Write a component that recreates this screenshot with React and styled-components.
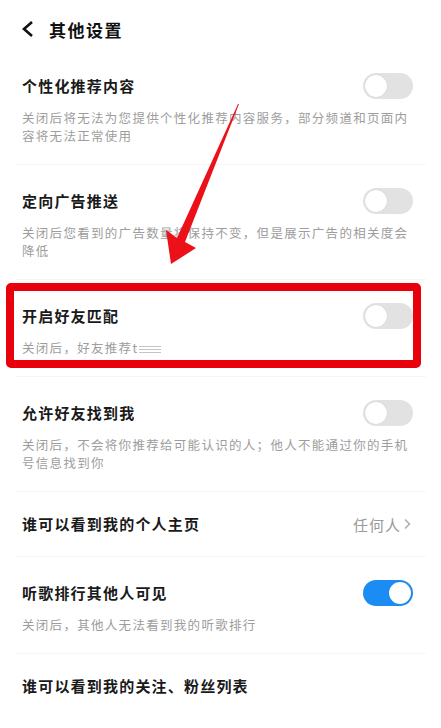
import React from "react";
import styled, { createGlobalStyle } from "styled-components";

const GlobalStyle = createGlobalStyle`
  body {
    margin: 0;
    background: #fff;
    font-family: "Noto Sans CJK SC", "Noto Sans", sans-serif;
  }
`;

const Page = styled.div`
  position: relative;
  width: 441px;
  height: 728px;
  overflow: hidden;
  background: #fff;
`;

const Header = styled.div`
  height: 50px;
  box-sizing: border-box;
  padding: 8px 0 0 22px;
  display: flex;
  align-items: center;
  gap: 15px;
`;

const HeaderTitle = styled.h1`
  margin: 0;
  font-size: 17px;
  font-weight: 700;
  letter-spacing: 1.5px;
  color: #111;
`;

const List = styled.div`
  padding: 0 15px;
`;

const Row = styled.div`
  padding: ${(props) => (props.single ? "22px 15px 22px 7px" : "26px 13px 19px 7px")};
  border-bottom: ${(props) => (props.last ? "none" : "1px solid #f6f6f6")};
`;

const RowHead = styled.div`
  display: flex;
  align-items: center;
  justify-content: space-between;
  height: 20px;
`;

const Title = styled.div`
  font-size: 15px;
  font-weight: 700;
  letter-spacing: 1.2px;
  color: #1a1a1a;
  line-height: 20px;
`;

const Desc = styled.div`
  margin-top: 13px;
  font-size: 12.5px;
  line-height: 18px;
  letter-spacing: 1.3px;
  color: #9d9d9d;
`;

const Smudge = styled.span`
  display: inline-block;
  width: 22px;
  height: 7px;
  margin-left: 1px;
  vertical-align: middle;
  background: repeating-linear-gradient(#c4c4c4 0 1px, transparent 1px 3px);
`;

const Track = styled.div`
  width: 50px;
  height: 26px;
  box-sizing: border-box;
  border-radius: 13px;
  padding: 2px;
  display: flex;
  justify-content: ${(props) => (props.on ? "flex-end" : "flex-start")};
  background: ${(props) => (props.on ? "#1a8cf4" : "#e2e2e2")};
  flex-shrink: 0;
`;

const Knob = styled.div`
  width: 22px;
  height: 22px;
  border-radius: 50%;
  background: #fff;
  box-shadow: 0 0 1px rgba(0, 0, 0, 0.2);
`;

const Value = styled.span`
  display: flex;
  align-items: center;
  gap: 2px;
  font-size: 15px;
  color: #9a9a9a;
  letter-spacing: 1px;
`;

const RedBox = styled.div`
  position: absolute;
  left: 6px;
  top: 283px;
  width: 415px;
  height: 85px;
  box-sizing: border-box;
  border: 8px solid #e8000b;
  border-radius: 5px;
  pointer-events: none;
`;

const Arrow = styled.svg`
  position: absolute;
  left: 0;
  top: 0;
  pointer-events: none;
`;

function Toggle({ on }) {
  return (
    <Track on={on}>
      <Knob />
    </Track>
  );
}

function Chevron() {
  return (
    <svg width="12" height="18" viewBox="0 0 12 18">
      <polyline points="10,2 2,9 10,16" fill="none" stroke="#111" strokeWidth="2.6" strokeLinejoin="miter" />
    </svg>
  );
}

function SmallChevron() {
  return (
    <svg width="8" height="12" viewBox="0 0 8 12">
      <polyline points="2,1.5 6.5,6 2,10.5" fill="none" stroke="#a6a6a6" strokeWidth="1.3" />
    </svg>
  );
}

export default function App() {
  return (
    <Page>
      <GlobalStyle />
      <Header>
        <Chevron />
        <HeaderTitle>其他设置</HeaderTitle>
      </Header>
      <List>
        <Row>
          <RowHead>
            <Title>个性化推荐内容</Title>
            <Toggle />
          </RowHead>
          <Desc>关闭后将无法为您提供个性化推荐内容服务，部分频道和页面内容将无法正常使用</Desc>
        </Row>
        <Row>
          <RowHead>
            <Title>定向广告推送</Title>
            <Toggle />
          </RowHead>
          <Desc>关闭后您看到的广告数量将保持不变，但是展示广告的相关度会降低</Desc>
        </Row>
        <Row>
          <RowHead>
            <Title>开启好友匹配</Title>
            <Toggle />
          </RowHead>
          <Desc>
            关闭后，好友推荐t<Smudge />
          </Desc>
        </Row>
        <Row>
          <RowHead>
            <Title>允许好友找到我</Title>
            <Toggle />
          </RowHead>
          <Desc>关闭后，不会将你推荐给可能认识的人；他人不能通过你的手机号信息找到你</Desc>
        </Row>
        <Row single>
          <RowHead>
            <Title>谁可以看到我的个人主页</Title>
            <Value>
              任何人
              <SmallChevron />
            </Value>
          </RowHead>
        </Row>
        <Row>
          <RowHead>
            <Title>听歌排行其他人可见</Title>
            <Toggle on />
          </RowHead>
          <Desc>关闭后，其他人无法看到我的听歌排行</Desc>
        </Row>
        <Row single last>
          <RowHead>
            <Title>谁可以看到我的关注、粉丝列表</Title>
          </RowHead>
        </Row>
      </List>
      <RedBox />
      <Arrow width="441" height="728" viewBox="0 0 441 728">
        <polygon
          points="239,104 185,242 196,248 171,264 166,230 177,238 238,104"
          fill="#ec1018"
        />
      </Arrow>
    </Page>
  );
}
